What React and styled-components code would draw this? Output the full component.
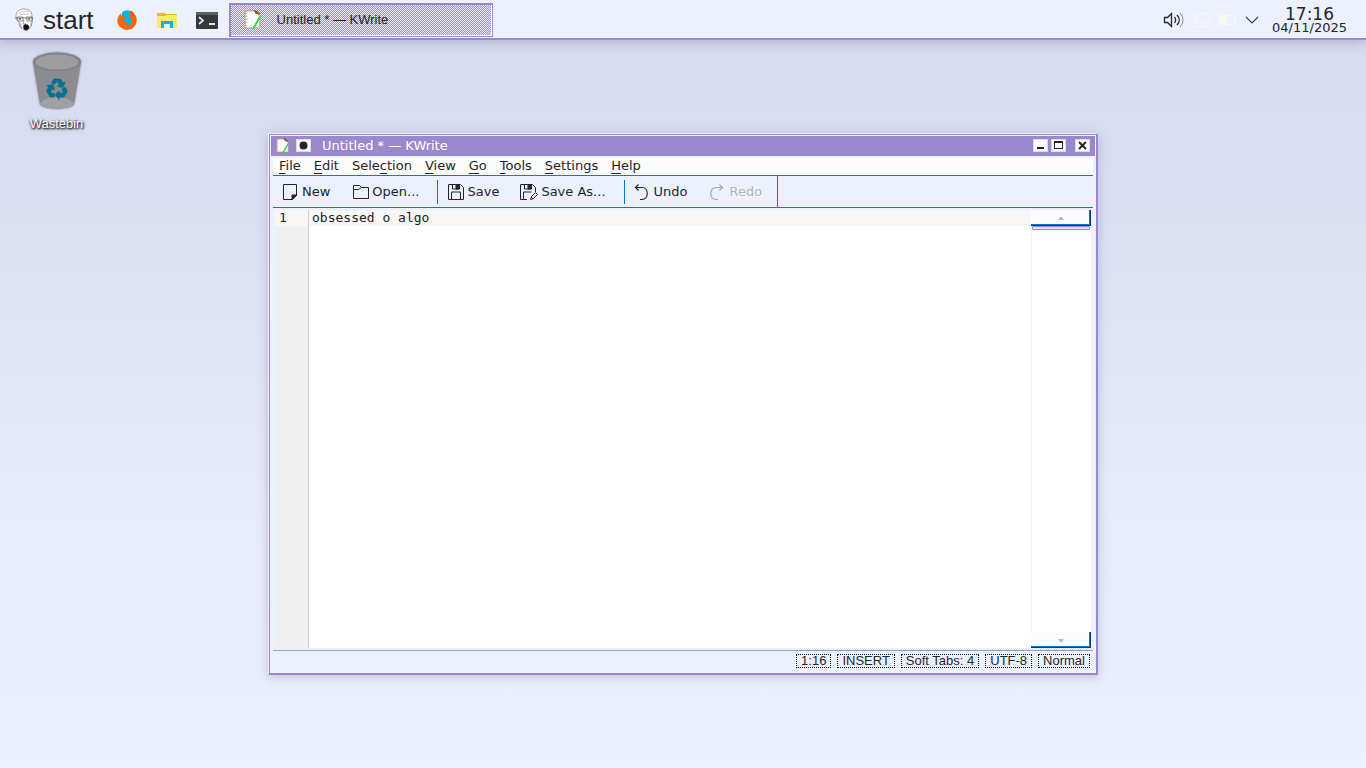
import React, { Component } from 'react';
import styled, { createGlobalStyle } from 'styled-components';

const sans = '"Liberation Sans", Arial, sans-serif';
const wide = '"DejaVu Sans", Verdana, sans-serif';
const mono = '"DejaVu Sans Mono", monospace';

const purple = '#9a88cc';
const pale = '#edf1fe';
const ink = '#232629';
const blue = '#0078dc';

const GlobalStyle = createGlobalStyle`
  * {
    box-sizing: border-box;
  }
  body {
    margin: 0;
    color: ${ink};
    font-family: ${wide};
    font-size: 13px;
  }
  button {
    margin: 0;
    padding: 0;
    border: 0;
    background: none;
    color: inherit;
    font: inherit;
  }
  svg {
    display: block;
    flex: none;
  }
`;

const Screen = styled.div`
  display: flex;
  flex-direction: column;
  min-height: 100vh;
  background: linear-gradient(#d5d9ee, #dde1f4 33%, #e6eafa 66%, #edf1fe);
`;

/* panel */

const Panel = styled.header`
  display: flex;
  align-items: center;
  height: 40px;
  padding: 2px 16px 0 0;
  background: ${pale};
  border-bottom: 2px solid ${purple};
  box-shadow: 0 1px 12px rgba(50, 50, 90, 0.3);
`;

const StartButton = styled.button`
  display: flex;
  align-items: center;
  gap: 8px;
  padding: 0 13px 0 14px;
  font-family: ${sans};
  font-size: 26px;
  line-height: 36px;
`;

const Launcher = styled.button`
  display: flex;
  align-items: center;
  justify-content: center;
  width: 40px;
  height: 36px;
`;

const Task = styled.button`
  display: flex;
  align-items: center;
  gap: 16px;
  width: 264px;
  height: 34px;
  margin-left: 2px;
  padding: 0 14px 2px;
  border: 1px solid ${purple};
  box-shadow: inset 1px 1px ${purple}, inset -1px -1px #fff;
  background: repeating-conic-gradient(${purple} 0 25%, ${pale} 0 50%) 0 0 / 2px 2px;
  font-family: ${sans};
  font-size: 13px;
`;

const Tray = styled.div`
  display: flex;
  align-items: center;
  gap: 8px;
  margin-left: auto;
  margin-right: 10px;
`;

const Clock = styled.div`
  display: flex;
  flex-direction: column;
  align-items: center;
  width: 81px;
`;

const Time = styled.div`
  font-size: 17px;
  line-height: 16px;
`;

const DateText = styled.div`
  font-size: 13px;
  line-height: 12px;
`;

/* desktop */

const Desktop = styled.main`
  display: grid;
  flex: 1;
  grid-template-columns: 268px minmax(0, 1fr) 268px;
`;

const DesktopIcon = styled.a`
  display: flex;
  flex-direction: column;
  align-items: center;
  gap: 5px;
  align-self: start;
  width: 113px;
  padding-top: 11px;
  color: #fff;
  font-family: ${sans};
  font-size: 13px;
  line-height: 16px;
  text-decoration: none;
  text-shadow: 1px 1px 2px #000, 0 1px 3px rgba(0, 0, 0, 0.8);

  svg {
    filter: drop-shadow(0 0 1px rgba(60, 60, 80, 0.6));
  }
`;

/* window */

const Frame = styled.section`
  display: flex;
  margin: 93px 0;
  border: 1px solid;
  border-color: ${pale} ${purple} ${purple} ${pale};
  box-shadow: 0 2px 10px rgba(60, 60, 110, 0.25);
`;

const FrameInner = styled.div`
  display: flex;
  flex: 1;
  flex-direction: column;
  min-width: 0;
  padding: 1px;
  border: 1px solid ${purple};
  background: ${pale};
`;

const TitleBar = styled.div`
  display: flex;
  align-items: center;
  gap: 3px;
  height: 20px;
  padding: 0 5px 1px;
  background: ${purple};
`;

const Title = styled.h1`
  flex: 1;
  margin: 0 0 0 8px;
  color: #fff;
  font-size: 13px;
  font-weight: normal;
`;

const WindowButton = styled.button`
  display: flex;
  align-items: center;
  justify-content: center;
  width: 15px;
  height: 13px;
  margin-left: ${props => props.$gap || 0}px;
  background: #fcfcfc;
  box-shadow: inset 0 0 0 1px #dcd8e4;
`;

const WindowBody = styled.div`
  display: flex;
  flex: 1;
  flex-direction: column;
  padding: 2px 2px 0;
`;

const MenuBar = styled.nav`
  display: flex;
  gap: 13px;
  height: 18px;
  padding: 0 6px 2px;
  background: #fcfcfc;
  border-bottom: 1px solid ${blue};
`;

const MenuItem = styled.button`
  line-height: 15px;

  u {
    text-decoration-thickness: 1px;
    text-underline-offset: 3px;
  }
`;

const ToolBar = styled.div`
  display: flex;
  align-items: center;
  height: 32px;
  border-bottom: 1px solid ${blue};
`;

const Tools = styled.div`
  display: flex;
  align-items: center;
  align-self: stretch;
  padding-right: 2px;
  border-right: 1px solid ${blue};
`;

const Tool = styled.button`
  display: flex;
  align-items: center;
  gap: 1px;
  margin-right: 7px;
  padding: 0 6px;

  &:disabled {
    color: #b0b2b8;
    text-shadow: 1px 1px #fff;
  }
`;

const Separator = styled.div`
  width: 1px;
  height: 24px;
  margin-left: 5px;
  background: ${blue};
`;

const Editor = styled.div`
  display: flex;
  flex: 1;
  margin: 2px;
  background: #fff;
  font-family: ${mono};
  font-size: 13px;
  line-height: 16px;
`;

const Gutter = styled.div`
  width: 34px;
  padding-left: 4px;
  border-right: 1px solid #cfcfcf;
  background: linear-gradient(#f7f6f5 16px, #efefef 16px);
`;

const TextArea = styled.textarea`
  flex: 1;
  min-width: 0;
  margin: 0;
  padding: 0 3px;
  border: 0;
  outline: 0;
  resize: none;
  background: linear-gradient(#f7f6f5 16px, #fff 16px);
  color: #1f1c1b;
  font: inherit;
`;

const ScrollBar = styled.div`
  display: flex;
  flex-direction: column;
  width: 60px;
  box-shadow: inset 1px 0 #f4f4f4;
`;

const ScrollButton = styled.button`
  display: flex;
  align-items: center;
  justify-content: center;
  height: 16px;
  padding-top: 1px;
  background: #fcfcfc;
  border: solid #06386c;
  border-width: 0 1px 1px 0;
  box-shadow: inset -1px -1px ${blue};
`;

const ScrollHandle = styled.div`
  height: 4px;
  margin: 0 1px auto;
  border: 1px solid ${purple};
  border-radius: 1px;
  background: #e4dff2;
`;

const StatusBar = styled.footer`
  display: flex;
  justify-content: flex-end;
  gap: 6px;
  height: 22px;
  padding: 3px 3px 0;
  border-top: 1px solid #98a6b8;
  font-family: ${sans};
  font-size: 13px;
`;

const StatusItem = styled.button`
  height: 14px;
  padding: 0 4px;
  border: 1px dotted #111;
  line-height: 12px;
`;

const FaceIcon = () => (
  <svg width="21" height="24" viewBox="0 0 21 24" fill="none" stroke="#666" strokeWidth="0.6">
    <path d="M2 8C2 3 6 1 10 1s8 2 8 7c1 5 0 9-2 12-2 3-6 3-8 0-1-2-1-4-3-6-2-1-3-3-3-6z" fill="#fff" />
    <path d="M5 5c3-2 7-2 10-1M6 7c3-1 6-1 9-1" stroke="#aaa" />
    <path d="M1 10h18M3 9h6v4H4zM12 9h6v4h-5z" stroke="#444" />
    <path d="M5 11h2M14 11h2" stroke="#222" strokeWidth="1.2" />
    <path d="M10 12l-1 4h3M5 15c0 3 2 5 3 6M17 14v4" />
    <path d="M9.500 18c1-2 5-2 5.500 1 0 3-4 4-5 2z" fill="#111" stroke="#111" />
  </svg>
);

const FirefoxIcon = () => (
  <svg width="22" height="22" viewBox="0 0 22 21">
    <path d="M6 3c3-3 8-3 11 1l1 8-6 5-6-3z" fill="#00b4f0" />
    <path
      d="M3 4l2-2 1 3 3 .5 1.500 0-.5 2-2.500 1.500v2l2-1 2 1-2 2.500c3 1.500 6-.5 6-3.500 0-2-.5-3-1.500-4l-1-3 1-3c1.500 2 3 2 4 4l1-1c2 3 2.500 7 .5 10.500-3 5-9.500 6.500-14 3C1 14 0 9 3 4z"
      fill="#ff6600"
      transform="translate(0 2)"
    />
    <path d="M14 1c3 1 5 3 5 7l-3-3z" fill="#e24d14" />
  </svg>
);

const FolderIcon = () => (
  <svg width="20" height="17" viewBox="0 0 20 17">
    <path d="M0 1h8l1 1h11v14H0z" fill="#e6b830" />
    <path d="M0 4h8l2-1h10v13H0z" fill="#ffe870" />
    <path d="M4 9h12v7h-3v-4H7v4H4z" fill="#10b0f0" />
    <path d="M7 12h6v4H7z" fill="#f3f0c0" />
  </svg>
);

const TerminalIcon = () => (
  <svg width="22" height="18" viewBox="0 0 22 18">
    <rect width="22" height="17" y="1" rx="1" fill="#35393d" />
    <path d="M0 1h22v3H0z" fill="#5b6064" />
    <path d="M3 6l4 3.500L3 13M13 13h6" fill="none" stroke="#e4e4e4" strokeWidth="1.800" />
  </svg>
);

const KWriteIcon = ({ size }) => (
  <svg width={size} height={size + 2} viewBox="0 0 16 18">
    <path d="M1 1h11l3 4v12H1z" fill="#fdfdfd" stroke="#b98f7c" strokeWidth="0.8" />
    <path d="M0 3h3M0 6h3M0 9h3M0 12h3M0 15h3" stroke="#aaa" />
    <path d="M10 0l5 4-4-1z" fill="#9a4a2c" stroke="#9a4a2c" />
    <path d="M15.500 6L8.500 18" stroke="#3fd23f" strokeWidth="1.800" />
  </svg>
);

const VolumeIcon = () => (
  <svg width="22" height="18" viewBox="0 0 22 18" fill="none" stroke={ink} strokeWidth="1.300">
    <path d="M1.500 6.500h3l4-4v13l-4-4h-3z" />
    <path d="M11.500 6c1.500 2 1.500 4 0 6" />
    <path d="M14 4c3 3 3 7 0 10" />
    <path d="M17 2c4 4 4 10 0 14" stroke="#a5a8b0" />
  </svg>
);

const NetworkIcon = () => (
  <svg width="18" height="16" viewBox="0 0 18 16" fill="none" stroke="#f8f8f6">
    <path d="M1.500 1.500h15v9h-15zM9 11v3M1 14.500h16M4 1v5h-3" />
  </svg>
);

const BatteryIcon = () => (
  <svg width="18" height="12" viewBox="0 0 18 12" fill="none" stroke="#f8f8f6">
    <path d="M.5 1.500h15v9H.5zM16.500 4v4" />
    <path d="M1 2h6v8H1z" fill="#f8f8f6" />
  </svg>
);

const ChevronIcon = () => (
  <svg width="14" height="8" viewBox="0 0 14 8" fill="none" stroke="#43474c" strokeWidth="1.200">
    <path d="M1 1l6 6 6-6" />
  </svg>
);

/* one third of the recycling triangle, turned around its centre */
const arrow = 'M-5.500 -6.500L-3 -10H3.500L6 -6L8 -7L6 -1.500L0.500 -2.500L2.500 -4L0 -8L-2.500 -4.500Z';

const WastebinIcon = () => (
  <svg width="54" height="60" viewBox="0 0 54 60">
    <path d="M3 11l7 42c3 6 31 6 34 0l7-42z" fill="#8b8c90" />
    <path d="M10 53c3 6 31 6 34 0-4-9-30-9-34 0z" fill="#a0a1a2" />
    <ellipse cx="27" cy="11" rx="24" ry="9.500" fill="#828386" />
    <ellipse cx="27" cy="11" rx="21.500" ry="7.500" fill="#9d9d9d" />
    <g fill="#06708f" stroke="#06708f" strokeWidth="0.8" transform="translate(27 38)">
      <path d={arrow} />
      <path d={arrow} transform="rotate(120)" />
      <path d={arrow} transform="rotate(240)" />
    </g>
  </svg>
);

/* 22px toolbar glyphs */
const ToolIcon = ({ children, color = ink }) => (
  <svg width="22" height="22" viewBox="0 0 22 22" fill="none" stroke={color}>
    {children}
  </svg>
);

const icons = {
  new: (
    <ToolIcon>
      <path d="M4.500 3.500h13v11l-4 4h-9z" />
      <path d="M13 19v-5h5z" fill={ink} />
    </ToolIcon>
  ),
  open: (
    <ToolIcon>
      <path d="M4.500 17.500v-13h6l2 2h7v11zM4.500 8.500h5l3-2" />
    </ToolIcon>
  ),
  save: (
    <ToolIcon>
      <path d="M4.500 3.500h12l3 3v12h-15zM7.500 18v-7h9v7M8.500 4v4h7V4" />
      <path d="M12 4h3v4h-3z" fill={ink} />
    </ToolIcon>
  ),
  saveAs: (
    <ToolIcon>
      <path d="M9 18.500H2.500v-15h12l3 3V11M5.500 18v-7h8M6.500 4v4h7V4" />
      <path d="M10 4h3v4h-3z" fill={ink} />
      <path d="M12.500 18.500l1-3 4-4 2 2-4 4zM13 16l2 2" />
    </ToolIcon>
  ),
  undo: (
    <ToolIcon>
      <path d="M7.500 3.500l-3 3 3 3M4.500 6.500h6.500c7 0 7 12 0 12h-2" strokeWidth="1.200" />
    </ToolIcon>
  ),
  redo: (
    <ToolIcon color="#a4a6ad">
      <path d="M13.500 3.500l3 3-3 3M16.500 6.500H10c-7 0-7 12 0 12h2" strokeWidth="1.200" />
    </ToolIcon>
  ),
};

const menus = [
  ['', 'F', 'ile'],
  ['', 'E', 'dit'],
  ['Sele', 'c', 'tion'],
  ['', 'V', 'iew'],
  ['', 'G', 'o'],
  ['', 'T', 'ools'],
  ['', 'S', 'ettings'],
  ['', 'H', 'elp'],
];

const tools = [
  { icon: 'new', label: 'New' },
  { icon: 'open', label: 'Open...' },
  { separator: true },
  { icon: 'save', label: 'Save' },
  { icon: 'saveAs', label: 'Save As...' },
  { separator: true },
  { icon: 'undo', label: 'Undo' },
  { icon: 'redo', label: 'Redo', disabled: true },
];

const status = ['1:16', 'INSERT', 'Soft Tabs: 4', 'UTF-8', 'Normal'];

const TopPanel = () => (
  <Panel>
    <StartButton><FaceIcon />start</StartButton>
    <Launcher aria-label="Firefox"><FirefoxIcon /></Launcher>
    <Launcher aria-label="Files"><FolderIcon /></Launcher>
    <Launcher aria-label="Terminal"><TerminalIcon /></Launcher>
    <Task><KWriteIcon size={17} />Untitled * — KWrite</Task>
    <Tray>
      <VolumeIcon />
      <NetworkIcon />
      <BatteryIcon />
      <ChevronIcon />
    </Tray>
    <Clock>
      <Time>17:16</Time>
      <DateText>04/11/2025</DateText>
    </Clock>
  </Panel>
);

const EditorWindow = ({ text, onChange }) => (
  <Frame>
    <FrameInner>
      <TitleBar>
        <KWriteIcon size={13} />
        <WindowButton $gap={4} aria-label="On all desktops">
          <svg width="9" height="9"><circle cx="4.500" cy="4.500" r="4" fill={ink} /></svg>
        </WindowButton>
        <Title>Untitled * — KWrite</Title>
        <WindowButton aria-label="Minimize">
          <svg width="9" height="9"><path d="M1 6h7v2H1z" fill={ink} /></svg>
        </WindowButton>
        <WindowButton aria-label="Maximize">
          <svg width="9" height="9"><path d="M0 0h9v8H0zM1 2v5h7V2z" fill={ink} fillRule="evenodd" /></svg>
        </WindowButton>
        <WindowButton $gap={6} aria-label="Close">
          <svg width="9" height="9"><path d="M1 1l7 7M8 1L1 8" stroke={ink} strokeWidth="2" /></svg>
        </WindowButton>
      </TitleBar>
      <WindowBody>
        <MenuBar>
          {menus.map((m, i) => {
            return <MenuItem key={i}>{m[0]}<u>{m[1]}</u>{m[2]}</MenuItem>;
          })}
        </MenuBar>
        <ToolBar>
          <Tools>
            {tools.map((t, i) => {
              return t.separator
                ? <Separator key={i} />
                : <Tool key={i} disabled={t.disabled}>{icons[t.icon]}{t.label}</Tool>;
            })}
          </Tools>
        </ToolBar>
        <Editor>
          <Gutter>1</Gutter>
          <TextArea aria-label="Document" spellCheck="false" value={text} onChange={onChange} />
          <ScrollBar>
            <ScrollButton aria-label="Scroll up">
              <svg width="6" height="3"><path d="M0 3l2-3h2l2 3z" fill="#a9bdf5" /></svg>
            </ScrollButton>
            <ScrollHandle />
            <ScrollButton aria-label="Scroll down">
              <svg width="6" height="3"><path d="M0 0l2 3h2l2-3z" fill="#a9bdf5" /></svg>
            </ScrollButton>
          </ScrollBar>
        </Editor>
        <StatusBar>
          {status.map((s, i) => {
            return <StatusItem key={i}>{s}</StatusItem>;
          })}
        </StatusBar>
      </WindowBody>
    </FrameInner>
  </Frame>
);

class App extends Component {
  constructor(props) {
    super(props);

    this.state = {
      text: 'obsessed o algo',
    };
  }

  changeText = e => {
    this.setState({ text: e.target.value });
  };

  render() {
    return (
      <Screen>
        <GlobalStyle />
        <TopPanel />
        <Desktop>
          <DesktopIcon href="#wastebin"><WastebinIcon />Wastebin</DesktopIcon>
          <EditorWindow text={this.state.text} onChange={this.changeText} />
        </Desktop>
      </Screen>
    );
  }
}

export default App;
